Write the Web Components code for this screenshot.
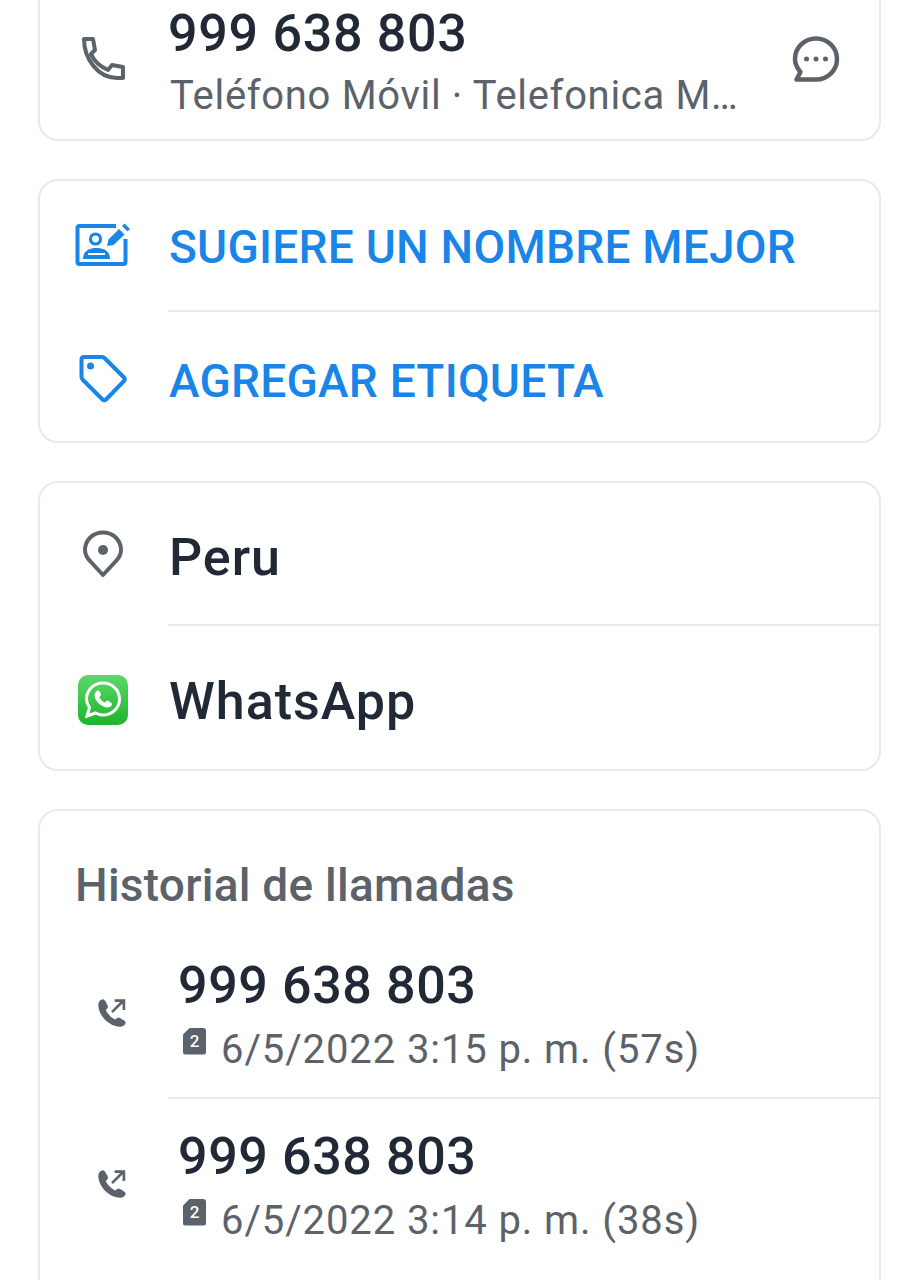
<!DOCTYPE html>
<html lang="es">
<head>
<meta charset="utf-8">
<title>Detalle</title>
<style>
  html, body { margin: 0; padding: 0; background: #fff; height: 1280px; overflow: hidden; }
  body { font-family: Roboto, "Liberation Sans", sans-serif; }
  main { display: flex; flex-direction: column; gap: 38px; padding: 0 38px; margin-top: -24px; }
  svg { display: block; }
</style>
</head>
<body>
<main>
  <info-card>
    <info-row height="161" style="--body-pad: 11px; --icon-shift: -1px">
      <svg slot="icon" width="44" height="44" viewBox="0 0 44 44" fill="none" stroke="#5c6269" stroke-width="4" stroke-linejoin="round" stroke-linecap="round"><path d="M3 3H12L14 14 10 18C13 25 20 31 27 34L31 29 42 31V42H36C18 42 3 24 3 3Z"/></svg>
      <phone-line>999 638 803</phone-line>
      <sub-line>Teléfono Móvil · Telefonica M…</sub-line>
      <svg slot="end" width="48" height="48" viewBox="0 0 48 48" fill="none"><path d="M24 3.500C35.500 3.500 45 12.500 45 24S35.500 44.500 24 44.500H4.500L8.500 37C5 33 3 29 3 24 3 12.500 12.500 3.500 24 3.500Z" stroke="#5c6269" stroke-width="4.500" stroke-linejoin="round"/><circle cx="14.500" cy="24" r="2.500" fill="#5c6269"/><circle cx="24" cy="24" r="2.500" fill="#5c6269"/><circle cx="33.500" cy="24" r="2.500" fill="#5c6269"/></svg>
    </info-row>
  </info-card>

  <info-card>
    <info-row height="129" divided style="--body-pad: 2px">
      <svg slot="icon" width="56" height="46" viewBox="0 0 56 46" fill="none"><path d="M41 5H4.500C3 5 2.500 5.500 2.500 7V41C2.500 42.500 3 43 4.500 43H48.500C50 43 50.500 42.500 50.500 41V18" stroke="#1a85e8" stroke-width="4"/><circle cx="20.500" cy="18" r="5" stroke="#1a85e8" stroke-width="3.200"/><path d="M8 38C8 30 14 27 21.500 27S35 30 35 38Z" fill="#1a85e8"/><path d="M13 33H30" stroke="#fff" stroke-width="2"/><path d="M32 25 33.500 18.500 44 8 49.500 13.500 38.500 24Z" fill="#1a85e8"/><path d="M47 5 49.500 2.500 55 8 52.500 10.500Z" fill="#1a85e8"/></svg>
      <action-line>SUGIERE UN NOMBRE MEJOR</action-line>
    </info-row>
    <info-row height="129" style="--row-pad: 8px">
      <svg slot="icon" width="50" height="50" viewBox="0 0 50 50" fill="none"><path d="M3.500 5.500C3.500 4 4.500 3 6 3H24C25 3 26 3.500 26.500 4L46 23.500C47 24.500 47 26 46 27L28 45.500C27 46.500 25.500 46.500 24.500 45.500L5 26C4 25 3.500 24 3.500 23Z" stroke="#1a85e8" stroke-width="4" stroke-linejoin="round"/><circle cx="12.500" cy="12" r="3.500" fill="#1a85e8"/></svg>
      <action-line>AGREGAR ETIQUETA</action-line>
    </info-row>
  </info-card>

  <info-card>
    <info-row height="141" divided style="--row-pad: 8px; --icon-shift: -8px">
      <svg slot="icon" width="40" height="48" viewBox="0 0 40 48" fill="none"><path d="M20 45 7.500 31.500C4 28 2 24.500 2 20 2 10 10 2.500 20 2.500S38 10 38 20C38 24.500 36 28 32.500 31.500Z" stroke="#5c6269" stroke-width="4" stroke-linejoin="round"/><circle cx="20" cy="20" r="5" fill="#5c6269"/></svg>
      <title-line>Peru</title-line>
    </info-row>
    <info-row height="143" style="--row-pad: 9px">
      <svg slot="icon" width="50" height="50" viewBox="0 0 50 50"><defs><linearGradient id="wa" x1="0" y1="0" x2="0" y2="1"><stop offset="0" stop-color="#5bd96a"/><stop offset="1" stop-color="#1fb32c"/></linearGradient></defs><rect width="50" height="50" rx="10" fill="url(#wa)"/><path d="M9 41 11.500 32.500C9.500 29.500 8.500 27 8.500 24 8.500 15 16 8 25 8S41.500 15 41.500 24 34 40 25 40C22.500 40 20 39.300 17.500 38Z" fill="none" stroke="#fff" stroke-width="3"/><path d="M19.500 15.500C18 16 16.500 18 16.500 20.500 16.500 25.500 23.500 32.500 29.500 32.500 32 32.500 34 31 34 29 34 28 30 25.500 29 25.500L27 27.500C25 27 22 24 21.500 22L23 20C23.500 19.500 21.500 15.500 20.500 15.500Z" fill="#fff"/></svg>
      <title-line>WhatsApp</title-line>
    </info-row>
  </info-card>

  <info-card style="padding-bottom: 60px">
    <card-heading>Historial de llamadas</card-heading>
    <call-row divided date="6/5/2022 3:15 p. m. (57s)">999 638 803</call-row>
    <call-row date="6/5/2022 3:14 p. m. (38s)">999 638 803</call-row>
  </info-card>
</main>

<script>
class InfoCard extends HTMLElement {
  constructor() {
    super()
    this.attachShadow({ mode: 'open' })
    this.shadowRoot.innerHTML = `
      <style>
        :host { display: block; background: #fff; border: 2px solid #e8e9eb; border-radius: 20px; }
      </style>
      <slot></slot>
    `
  }
}

class InfoRow extends HTMLElement {
  constructor() {
    super()
    this.attachShadow({ mode: 'open' })
  }

  connectedCallback() {
    const h = this.getAttribute('height') || 130
    const divider = this.hasAttribute('divided') ? '<div class="divider"></div>' : ''
    this.shadowRoot.innerHTML = `
      <style>
        :host { display: block; }
        .row { display: grid; grid-template-columns: 128px 1fr 87px; align-items: center; height: ${h}px; box-sizing: border-box; padding-top: var(--row-pad, 0); }
        .icon { display: flex; justify-content: center; padding-right: 3px; margin-top: var(--icon-shift, -4px); }
        .body { display: flex; flex-direction: column; min-width: 0; padding-left: 1px; padding-top: var(--body-pad, 0); }
        .divider { height: 2px; margin: 0 -2px 0 128px; background: #e8e9eb; }
      </style>
      <div class="row">
        <div class="icon"><slot name="icon"></slot></div>
        <div class="body"><slot></slot></div>
        <div><slot name="end"></slot></div>
      </div>
      ${divider}
    `
  }
}

class TextLine extends HTMLElement {
  constructor() {
    super()
    this.attachShadow({ mode: 'open' })
    this.shadowRoot.innerHTML = `<style>:host { ${this.constructor.css} }</style><slot></slot>`
  }
}

class PhoneLine extends TextLine {
  static css = 'display: block; font-size: 52px; font-weight: 500; line-height: 62px; letter-spacing: .7px; margin-left: -1px; color: #202935; white-space: nowrap;'
}
class SubLine extends TextLine {
  static css = 'display: block; font-size: 40px; line-height: 61px; letter-spacing: .67px; padding-left: 1px; color: #5c6269; white-space: nowrap;'
}
class ActionLine extends TextLine {
  static css = 'display: block; font-size: 46px; font-weight: 500; line-height: 56px; letter-spacing: .25px; color: #1a85e8; white-space: nowrap;'
}
class TitleLine extends TextLine {
  static css = 'display: block; font-size: 52px; font-weight: 500; line-height: 62px; letter-spacing: 1px; color: #202935; white-space: nowrap;'
}
class CardHeading extends TextLine {
  static css = 'display: block; font-size: 46px; font-weight: 500; line-height: 54px; letter-spacing: .25px; color: #5c6269; padding: 47px 35px 16px; white-space: nowrap;'
}

class CallRow extends HTMLElement {
  constructor() {
    super()
    this.attachShadow({ mode: 'open' })
  }

  connectedCallback() {
    const date = this.getAttribute('date') || ''
    const divider = this.hasAttribute('divided') ? '<div class="divider"></div>' : ''
    this.shadowRoot.innerHTML = `
      <style>
        :host { display: block; }
        .row { display: grid; grid-template-columns: 128px 1fr; align-items: center; height: 169px; }
        .icon { display: flex; justify-content: center; padding-left: 16px; }
        .body { padding-left: 10px; padding-top: 13px; }
        .num { font-size: 52px; font-weight: 500; line-height: 62px; letter-spacing: .6px; color: #202935; white-space: nowrap; }
        .date { display: flex; align-items: center; gap: 15px; font-size: 40px; line-height: 66px; letter-spacing: .9px; color: #5c6269; white-space: nowrap; }
        .divider { height: 2px; margin: 0 -2px 0 128px; background: #e8e9eb; }
        .sim { position: relative; top: -9px; margin-left: 5px; width: 23px; height: 27px; background: #5c6269; border-radius: 3px; clip-path: polygon(7px 0, 100% 0, 100% 100%, 0 100%, 0 7px); color: #fff; font-size: 17px; font-weight: 500; line-height: 27px; letter-spacing: 0; text-align: center; }
      </style>
      <div class="row">
        <div class="icon">
          <svg width="30" height="30" viewBox="0 0 34 34" fill="none"><path d="M7 1.500C4 2 1.500 4 1.500 8 1.500 20 14 32.500 26 32.500 29 32.500 32 31 32.500 28 33 26 25 21.500 24 22L20.500 24.500C16 22.500 12 18 10 14L12.500 10.500C13 9.500 9 1.500 7 1.500Z" fill="#5c6269"/><path d="M17 16 29 4M20 3H30.500V13.500" stroke="#5c6269" stroke-width="3"/></svg>
        </div>
        <div class="body">
          <div class="num"><slot></slot></div>
          <div class="date"><span class="sim">2</span><span>${date}</span></div>
        </div>
      </div>
      ${divider}
    `
  }
}

customElements.define('info-card', InfoCard)
customElements.define('info-row', InfoRow)
customElements.define('phone-line', PhoneLine)
customElements.define('sub-line', SubLine)
customElements.define('action-line', ActionLine)
customElements.define('title-line', TitleLine)
customElements.define('card-heading', CardHeading)
customElements.define('call-row', CallRow)
</script>
</body>
</html>
